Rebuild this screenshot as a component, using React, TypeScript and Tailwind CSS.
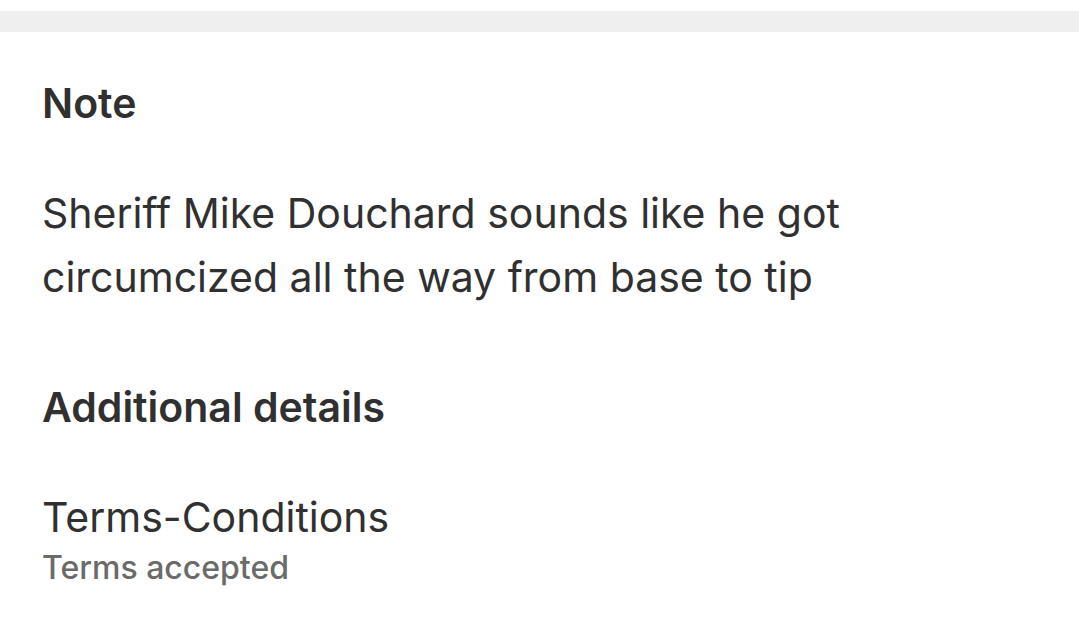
export default function App() {
  return (
    <div className="w-[1079px] h-[640px] bg-white overflow-hidden" style={{ fontFamily: 'Inter, "Noto Sans", sans-serif' }}>
      <div className="h-[11px] bg-white" />
      <div className="h-[21px] bg-[#efefef]" />
      <div className="px-[42px] text-[#303030]">
        <h2 className="mt-[47px] text-[41px] leading-[48px] font-semibold">Note</h2>
        <p className="mt-[54px] text-[41px] leading-[64px]">
          Sheriff Mike Douchard sounds like he got
          <br />
          circumcized all the way from base to tip
        </p>
        <h2 className="mt-[74px] text-[41px] leading-[48px] font-semibold">Additional details</h2>
        <div className="mt-[62px] text-[41px] leading-[48px]">Terms-Conditions</div>
        <div className="mt-[7px] text-[32px] leading-[40px] font-medium text-[#6a6a6a]">Terms accepted</div>
      </div>
    </div>
  );
}
